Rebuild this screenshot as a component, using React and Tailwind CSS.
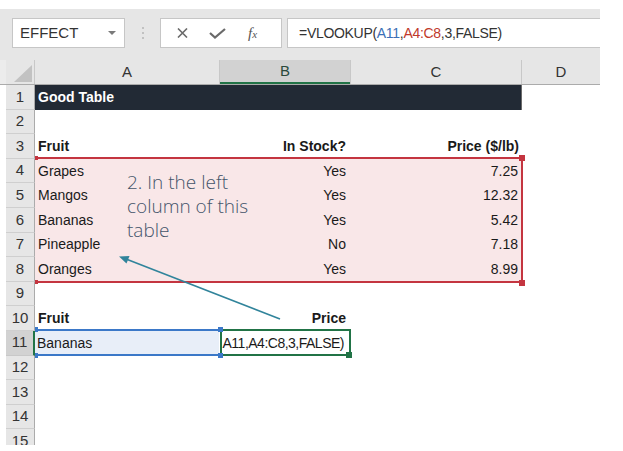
import React from "react";

const fruits = [
  ["Grapes", "Yes", "7.25"],
  ["Mangos", "Yes", "12.32"],
  ["Bananas", "Yes", "5.42"],
  ["Pineapple", "No", "7.18"],
  ["Oranges", "Yes", "8.99"],
];

function Row({ n, sel, children }) {
  return (
    <div className="flex h-[24.6px]">
      <div className="w-[6px] shrink-0" />
      <div
        className={
          sel
            ? "w-[29px] shrink-0 flex items-center justify-center text-[15px] text-[#333] bg-[#d2d2d2] border-b border-[#c8c8c8] border-r-2 border-r-[#217346]"
            : "w-[29px] shrink-0 flex items-center justify-center text-[15px] text-[#333] bg-[#e6e6e6] border-b border-[#cfcfcf] border-r border-r-[#ababab]"
        }
      >
        {n}
      </div>
      {children}
    </div>
  );
}

function Cell({ className, children }) {
  return (
    <div className={"shrink-0 flex items-center overflow-hidden whitespace-nowrap text-[14px] text-[#1a1a1a] " + className}>
      {children}
    </div>
  );
}

export default function App() {
  return (
    <div className="relative w-[623px] h-[451px] overflow-hidden bg-white font-['Liberation_Sans',Arial,sans-serif]">
      <div className="h-[9px]" />
      <div className="w-[600px] bg-[#e6e6e6]">
        {/* formula bar */}
        <div className="flex h-[51px] pt-[9px] pb-[12px]">
          <div className="ml-[12px] w-[113px] h-[30px] bg-white border border-[#c6c6c6] flex items-center justify-between pl-[7px] pr-[8px]">
            <span className="text-[15px] text-[#333]">EFFECT</span>
            <svg width="8" height="4" viewBox="0 0 8 4">
              <path d="M0 0 L8 0 L4 4 Z" fill="#7a7a7a" />
            </svg>
          </div>
          <div className="w-[35px] flex items-center justify-center">
            <svg width="4" height="14" viewBox="0 0 4 14">
              <circle cx="2" cy="2" r="1" fill="#b5b5b5" />
              <circle cx="2" cy="7" r="1" fill="#b5b5b5" />
              <circle cx="2" cy="12" r="1" fill="#b5b5b5" />
            </svg>
          </div>
          <div className="w-[122px] h-[30px] bg-white border border-[#c6c6c6] flex items-center">
            <svg className="ml-[16px]" width="11" height="10" viewBox="0 0 11 10">
              <path d="M1 0.5 L10 9.5 M10 0.5 L1 9.5" stroke="#6a6a6a" strokeWidth="1.6" />
            </svg>
            <svg className="ml-[21px]" width="17" height="11" viewBox="0 0 17 11">
              <path d="M1 5 L6 9.5 L16 1" stroke="#6a6a6a" strokeWidth="2.2" fill="none" />
            </svg>
            <span className="ml-[22px] font-['Liberation_Serif',serif] italic text-[15px] text-[#555] leading-none">
              f<span className="text-[11px]">x</span>
            </span>
          </div>
          <div className="ml-[5px] flex-1 h-[30px] bg-white border-y border-l border-[#c6c6c6] flex items-center pl-[11px] text-[14px] text-[#333] tracking-[-0.3px]">
            =VLOOKUP(<span className="text-[#3b6fb6]">A11</span>,<span className="text-[#c0392b]">A4:C8</span>,3,FALSE)
          </div>
        </div>
        {/* column headers */}
        <div className="flex h-[25px] border-b border-[#ababab] text-[15px] text-[#333]">
          <div className="w-[6px] bg-[#ececec]" />
          <div className="w-[29px] flex items-end justify-end pb-[2px] pr-[2px] border-r border-[#c8c8c8]">
            <svg width="18" height="17" viewBox="0 0 18 17">
              <path d="M18 0 L18 17 L0 17 Z" fill="#c2c2c2" />
            </svg>
          </div>
          <div className="w-[185px] flex items-center justify-center border-r border-[#c8c8c8]">A</div>
          <div className="w-[130px] flex items-center justify-center bg-[#d2d2d2] border-b-2 border-[#217346] text-[#2a4a3c]">B</div>
          <div className="w-[172px] flex items-center justify-center border-l border-r border-[#c8c8c8]">C</div>
          <div className="w-[78px] flex items-center justify-center">D</div>
        </div>
      </div>

      {/* grid */}
      <div className="h-[360px] overflow-hidden">
        <Row n={1}>
          <div className="w-[487px] shrink-0 bg-[#222a35] border-r border-[#6b6b6b] flex items-center pl-[3px] text-[14px] font-bold text-white">
            Good Table
          </div>
        </Row>
        <Row n={2} />
        <Row n={3}>
          <Cell className="w-[185px] pl-[3px] font-bold">Fruit</Cell>
          <Cell className="w-[130px] pr-[4px] justify-end font-bold">In Stock?</Cell>
          <Cell className="w-[172px] pr-[3px] justify-end font-bold">Price ($/lb)</Cell>
        </Row>
        {fruits.map((f, i) => (
          <Row key={f[0]} n={i + 4}>
            <div className="flex w-[487px] shrink-0 bg-[#f9e7e8]">
              <Cell className="w-[185px] pl-[3px]">{f[0]}</Cell>
              <Cell className="w-[130px] pr-[4px] justify-end">{f[1]}</Cell>
              <Cell className="w-[172px] pr-[4px] justify-end">{f[2]}</Cell>
            </div>
          </Row>
        ))}
        <Row n={9} />
        <Row n={10}>
          <Cell className="w-[185px] pl-[3px] font-bold">Fruit</Cell>
          <Cell className="w-[130px] pr-[4px] justify-end font-bold">Price</Cell>
        </Row>
        <Row n={11} sel>
          <Cell className="w-[184px] pl-[2px] bg-[#e8eef8]">Bananas</Cell>
          <Cell className="w-[130px] pl-[2px] pr-[5px] justify-end tracking-[-0.5px]">A11,A4:C8,3,FALSE)</Cell>
        </Row>
        <Row n={12} />
        <Row n={13} />
        <Row n={14} />
        <Row n={15} />
      </div>

      {/* range highlight A4:C8 */}
      <div className="absolute left-[36px] top-[157px] w-[487px] h-[126px] border-y-2 border-r-2 border-[#c43540]" />
      <div className="absolute left-[519px] top-[155px] w-[6px] h-[6px] bg-[#c43540]" />
      <div className="absolute left-[519px] top-[280px] w-[6px] h-[6px] bg-[#c43540]" />
      <div className="absolute left-[35px] top-[156px] w-[3px] h-[4px] bg-[#c43540]" />
      <div className="absolute left-[35px] top-[280px] w-[3px] h-[4px] bg-[#c43540]" />

      {/* A11 reference */}
      <div className="absolute left-[36px] top-[329px] w-[185px] h-[27px] border-y-2 border-[#3b78c8]" />
      {/* B11 active cell */}
      <div className="absolute left-[220px] top-[329px] w-[131px] h-[27px] border-2 border-[#217346]" />
      <div className="absolute left-[346px] top-[352px] w-[6px] h-[6px] bg-[#217346]" />
      <div className="absolute left-[218px] top-[327px] w-[5px] h-[5px] bg-[#3b78c8]" />
      <div className="absolute left-[218px] top-[353px] w-[5px] h-[5px] bg-[#3b78c8]" />
      <div className="absolute left-[35px] top-[327px] w-[3px] h-[5px] bg-[#3b78c8]" />
      <div className="absolute left-[35px] top-[353px] w-[3px] h-[5px] bg-[#3b78c8]" />

      {/* annotation */}
      <div className="absolute left-[127px] top-[170px] font-['Open_Sans',sans-serif] font-light text-[19px] leading-[24px] text-[#44546a]">
        <div>2. In the left</div>
        <div>column of this</div>
        <div>table</div>
      </div>
      <svg className="absolute left-0 top-0" width="623" height="451" viewBox="0 0 623 451">
        <line x1="280" y1="319" x2="126" y2="259" stroke="#31849b" strokeWidth="1.6" />
        <path d="M119 256.5 L129.5 256 L126.5 263.5 Z" fill="#31849b" />
      </svg>
    </div>
  );
}
